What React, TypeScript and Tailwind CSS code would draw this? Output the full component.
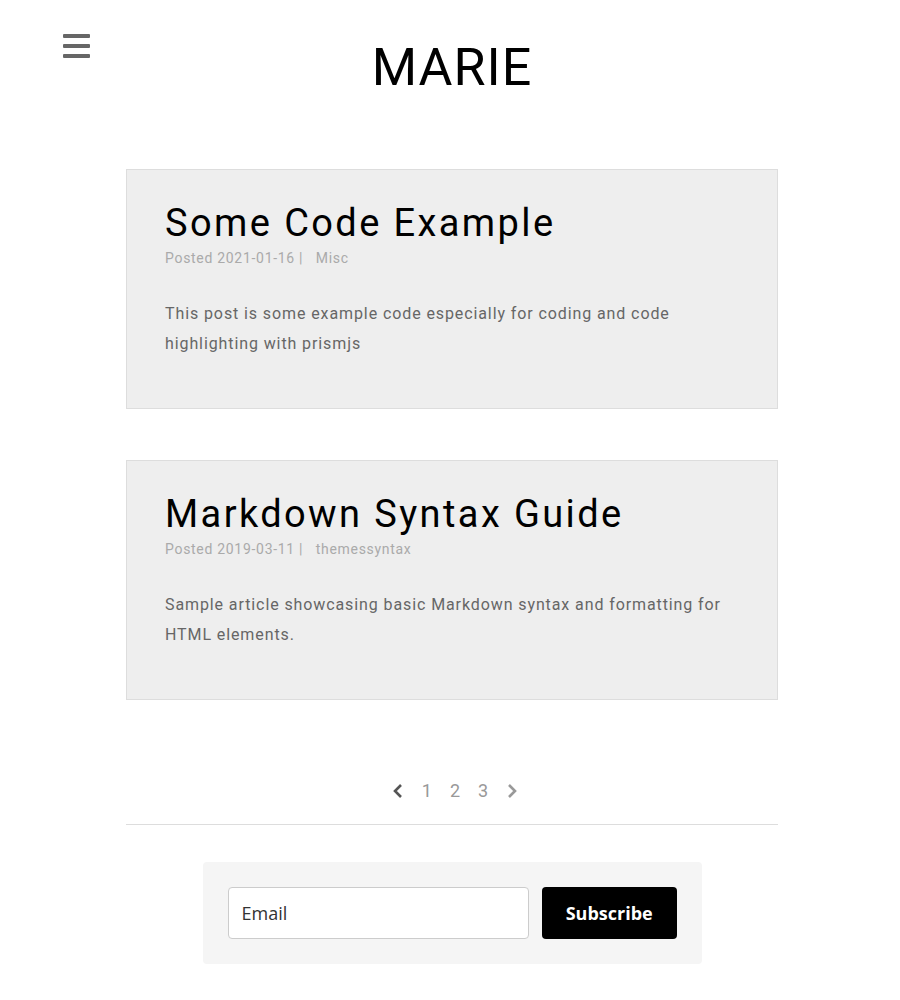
import React from "react";

const posts = [
  {
    title: "Some Code Example",
    date: "2021-01-16",
    cat: "Misc",
    desc: "This post is some example code especially for coding and code highlighting with prismjs",
  },
  {
    title: "Markdown Syntax Guide",
    date: "2019-03-11",
    cat: "themessyntax",
    desc: "Sample article showcasing basic Markdown syntax and formatting for HTML elements.",
  },
];

export default function App() {
  return (
    <div className="min-h-[1000px] bg-white pl-[4px] font-['Roboto',sans-serif]">
      <header className="relative h-[169px]">
        <div className="absolute left-[59px] top-[34px] flex w-[27px] flex-col gap-[6px]">
          <span className="block h-[4px] rounded-[1px] bg-[#666]" />
          <span className="block h-[4px] rounded-[1px] bg-[#666]" />
          <span className="block h-[4px] rounded-[1px] bg-[#666]" />
        </div>
        <h1 className="pt-[38px] text-center text-[52px] leading-[60px] tracking-[1px] text-black">
          MARIE
        </h1>
      </header>
      <main className="mx-auto flex w-[652px] flex-col gap-[51px]">
        {posts.map((p) => (
          <article
            key={p.title}
            className="h-[240px] border border-[#ddd] bg-[#eee] px-[38px] pt-[28px]"
          >
            <h2 className="text-[38px] leading-[50px] tracking-[2.4px] text-black">{p.title}</h2>
            <div className="mt-0 text-[14px] leading-[20px] tracking-[0.7px] text-[#aaa]">
              Posted {p.date} |&nbsp;&nbsp; {p.cat}
            </div>
            <p className="mt-[31px] text-[16px] leading-[30px] tracking-[0.9px] text-[#666]">
              {p.desc}
            </p>
          </article>
        ))}
      </main>
      <nav className="mt-[77px] flex items-center justify-center gap-[18px] pl-[6px] text-[18px] text-[#999]">
        <svg width="12" height="16" viewBox="0 0 12 16" className="text-[#555]">
          <path d="M9 2 L3 8 L9 14" fill="none" stroke="currentColor" strokeWidth="2.6" />
        </svg>
        <span>1</span>
        <span>2</span>
        <span>3</span>
        <svg width="12" height="16" viewBox="0 0 12 16" className="text-[#999]">
          <path d="M3 2 L9 8 L3 14" fill="none" stroke="currentColor" strokeWidth="2.6" />
        </svg>
      </nav>
      <div className="mx-auto mt-[20px] h-px w-[652px] bg-[#ddd]" />
      <section className="mx-auto mt-[37px] flex w-[499px] items-center gap-[13px] rounded-[4px] bg-[#f5f5f5] px-[25px] py-[25px] font-['Open_Sans',sans-serif]">
        <div className="flex h-[52px] w-[302px] items-center rounded-[4px] border border-[#ccc] bg-white px-[13px] text-[18px] text-[#333]">
          Email
        </div>
        <button className="h-[52px] w-[135px] rounded-[4px] bg-black text-[18px] font-bold text-white">
          Subscribe
        </button>
      </section>
    </div>
  );
}
